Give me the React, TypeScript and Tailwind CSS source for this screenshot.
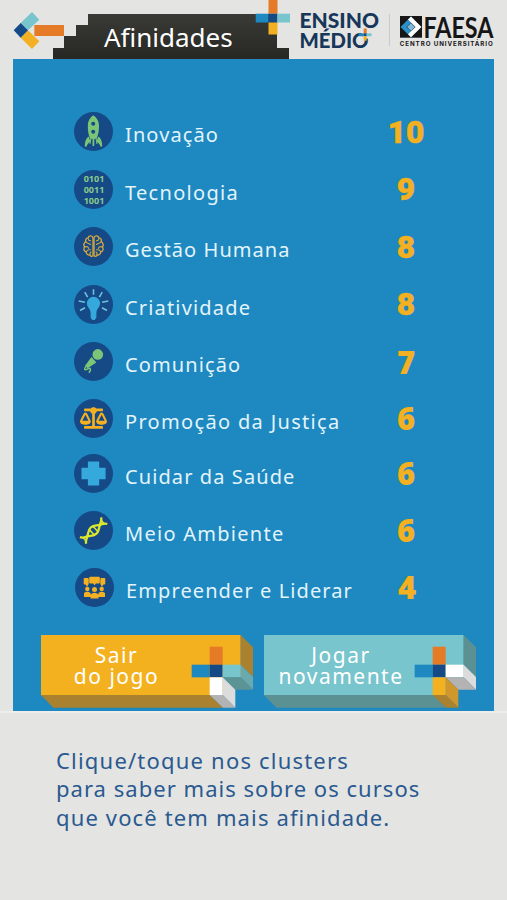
import type { ReactNode } from "react"
import { FaBalanceScale } from "react-icons/fa"
import clsx from "clsx"

type Affinity = {
  label: string
  score: number
  icon: ReactNode
  tracking: string
  scoreClass?: string
  rowClass?: string
}

const grotesk =
  "font-['Roboto',sans-serif] text-[31.5px] pt-[2px] [-webkit-text-stroke:0.6px_#f2b022]"
const humanist = "font-['Noto_Sans',sans-serif] text-[31px]"

function RocketIcon() {
  return (
    <svg viewBox="0 0 39 39" className="size-full" fill="#7cc576">
      <path d="M19.3 3.3c3.6 2.2 5.700 6 5.700 10.6 0 4.900-.8 9.300-2.600 12.800h-6.100c-1.800-3.500-2.500-7.900-2.500-12.800 0-4.600 1.900-8.400 5.500-10.600Z" />
      <path
        d="M15 25.200c-2.600 1.900-3.500 4.600-3.400 9.300 1-3 2.300-4.700 4.700-5.300M24 25.200c2.600 1.900 3.500 4.600 3.400 9.300-1-3-2.300-4.700-4.700-5.300M19.400 24v10"
        stroke="#7cc576"
        strokeWidth="1.700"
      />
      <path d="M17 26l-1 6M22 26l1 6" stroke="#7cc576" strokeWidth="1" />
      <circle cx="19.200" cy="11.800" r="2" fill="#154a87" />
      <circle cx="19.200" cy="19.700" r="2" fill="#154a87" />
    </svg>
  )
}

function BinaryIcon() {
  return (
    <div className="flex size-full flex-col items-center justify-center pl-px font-['Noto_Sans',sans-serif] text-[9px] leading-[11px] font-bold text-[#8bc98a]">
      <span>0101</span>
      <span>0011</span>
      <span>1001</span>
    </div>
  )
}

function BrainIcon() {
  return (
    <svg
      viewBox="0 0 39 39"
      className="size-full"
      fill="none"
      stroke="#dba93c"
      strokeWidth="1.300"
      strokeLinecap="round"
    >
      <path d="M19 10.500c-1.200-2.300-4.500-2-4.900.3-2.200.2-3 2.300-2.200 3.900-2.200 1-2.700 3.600-1.300 5.200-1.400 2-.5 4.500 1.600 5.100.2 2.400 2.200 3.400 3.700 2.900.9 2 3.100 1.800 3.100.2Z" />
      <path d="M20 10.500c1.200-2.300 4.500-2 4.900.3 2.200.2 3 2.300 2.200 3.900 2.200 1 2.700 3.600 1.300 5.200 1.400 2 .5 4.500-1.600 5.100-.2 2.400-2.200 3.400-3.700 2.900-.9 2-3.100 1.800-3.100.2Z" />
      <path
        d="M14.100 11.200c0 1.700 1 2.600 2.500 2.500M12.200 15c1 1.700 2.800 1.300 4.300 2.500M11 20c2-.8 3.300-.3 3.600 1.500M12.500 24.500c.5-1.500 1.700-2 4-1.700M16 27.500c-.3-1.200.2-2 1-2.500M24.900 11.200c0 1.700-1 2.600-2.500 2.500M26.800 15c-1 1.700-2.800 1.300-4.300 2.500M28 20c-2-.8-3.300-.3-3.600 1.500M26.500 24.500c-.5-1.500-1.700-2-4-1.700M23 27.500c.3-1.200-.2-2-1-2.500"
        strokeWidth="1.100"
      />
    </svg>
  )
}

function BulbIcon() {
  return (
    <svg viewBox="0 0 39 39" className="size-full">
      <path
        d="M19.500 11.700a6.600 6.600 0 0 1 6.600 6.600c0 4-3.700 5.500-3.700 9.700v4.500l-1.700 2.500h-2.400l-1.700-2.500V28c0-4.200-3.700-5.700-3.700-9.700a6.600 6.600 0 0 1 6.600-6.600Z"
        fill="#35a9dc"
      />
      <path
        d="M19.500 4.300v5.500M10.800 7.200l2.800 5M28.200 7.200l-2.800 5M4.700 16l6.300 1.200M34.300 16l-6.300 1.200M6 25.500l5-2.800M33 25.500l-5-2.800"
        stroke="#6fc0dd"
        strokeWidth="1.600"
      />
    </svg>
  )
}

function MicIcon() {
  return (
    <svg viewBox="0 0 39 39" className="size-full" fill="#7cc576">
      <circle cx="23.800" cy="12.400" r="5.300" />
      <path d="M17.500 15 22.300 20.500 13.600 26.200 11 23.800Z" />
      <path
        d="M12 24.500c-2.600 2.600-1.300 4.300 1.200 2.700 3-1.800 4.700-.4 1.700 3.500"
        fill="none"
        stroke="#7cc576"
        strokeWidth="1.500"
      />
    </svg>
  )
}

function CrossIcon() {
  return (
    <svg viewBox="0 0 39 39" className="size-full">
      <path
        d="M13.900 7.500h11.300v6.300h6.400v11.400h-6.400v6.300H13.900v-6.300H7.500V13.800h6.400Z"
        fill="#35a9dc"
      />
    </svg>
  )
}

function DnaIcon() {
  return (
    <svg viewBox="0 0 39 39" className="size-full">
      <g
        transform="translate(19.600 19.600) rotate(-43)"
        fill="none"
        stroke="#dbe92e"
        strokeWidth="2.300"
      >
        <path d="M-14.500-4.500C-13-1.500-11-1.500-8.500 0-5 2-4 4.200 0 4.200S5 2 8.500 0C11-1.500 13-1.500 14.500-4.500" />
        <path d="M-14.500 4.500C-13 1.500-11 1.500-8.500 0-5-2-4-4.200 0-4.200S5-2 8.500 0C11 1.500 13 1.500 14.500 4.500" />
        <path d="M-2.500-4v8M2.500-4v8M-12.500-3v6M12.500-3v6" strokeWidth="1.500" />
      </g>
    </svg>
  )
}

function TeamIcon() {
  return (
    <svg viewBox="0 0 39 39" className="size-full" fill="#f2b022">
      <rect x="8.700" y="10" width="5" height="6.500" rx="1" />
      <rect x="14.200" y="8.800" width="10.600" height="6.700" rx="1" />
      <rect x="25.300" y="10" width="5" height="6.500" rx="1" />
      <path d="M10.500 16h3l-1.500 3ZM28.500 16h-3l1.500 3ZM18 15h3l-1.500 2.500Z" />
      <circle cx="12.300" cy="21" r="2.200" />
      <circle cx="19.500" cy="21.500" r="2.500" />
      <circle cx="26.700" cy="21" r="2.200" />
      <path d="M9 25q3.300-2.500 6.500 0v4H9ZM23.500 25q3.300-2.500 6.500 0v4h-6.500ZM15.500 26.500q4-3.500 8 0v4h-8Z" />
    </svg>
  )
}

const affinities: Affinity[] = [
  { label: "Inovação", score: 10, icon: <RocketIcon />, tracking: "tracking-[1.1px]", scoreClass: grotesk },
  { label: "Tecnologia", score: 9, icon: <BinaryIcon />, tracking: "tracking-[1.3px]", scoreClass: grotesk },
  { label: "Gestão Humana", score: 8, icon: <BrainIcon />, tracking: "tracking-[1.05px]", scoreClass: grotesk },
  { label: "Criatividade", score: 8, icon: <BulbIcon />, tracking: "tracking-[1.17px]", scoreClass: grotesk },
  { label: "Comunição", score: 7, icon: <MicIcon />, tracking: "tracking-[1.12px]" },
  {
    label: "Promoção da Justiça",
    score: 6,
    icon: <FaBalanceScale className="h-[22px] w-[27px] text-[#f2b022]" />,
    tracking: "tracking-[1.33px]",
  },
  { label: "Cuidar da Saúde", score: 6, icon: <CrossIcon />, tracking: "tracking-[1.1px]" },
  { label: "Meio Ambiente", score: 6, icon: <DnaIcon />, tracking: "tracking-[1.27px]" },
  {
    label: "Empreender e Liderar",
    score: 4,
    icon: <TeamIcon />,
    tracking: "tracking-[1.1px]",
    rowClass: "translate-x-[1px]",
  },
]

function BackArrow() {
  return (
    <svg viewBox="39 33 156 117" className="h-[39px] w-[52px]">
      <path d="M96 36 118 59 84 91 62 69Z" fill="#78c5cd" />
      <path d="M84 91 118 124 96 147 62 113Z" fill="#f2b022" />
      <path d="M62 69 84 91 62 113 41 91Z" fill="#154a87" />
      <path d="M103 75H192V108H103Z" fill="#e57a27" />
    </svg>
  )
}

function HeaderCross() {
  return (
    <svg
      viewBox="0 0 35 35"
      className="absolute top-0 left-[255px] h-[35px] w-[35px]"
    >
      <path d="M13.500 0h9v13.700h-9Z" fill="#e57a27" />
      <path d="M.7 13.700h12.800v8.800H.7Z" fill="#1e88c1" />
      <path d="M13.500 13.700h9v8.800h-9Z" fill="#154a87" />
      <path d="M22.500 13.700H35v8.800H22.500Z" fill="#78c5cd" />
      <path d="M13.500 22.500h9v12h-9Z" fill="#f2b022" />
    </svg>
  )
}

function EnsinoMedioLogo() {
  return (
    <svg viewBox="299 10 82 42" className="h-[42px] w-[82px] overflow-visible">
      <g
        fill="#17375a"
        fontFamily="Lato, sans-serif"
        fontSize="20"
        fontWeight="900"
      >
        <text x="299.500" y="27.800" textLength="79.500" lengthAdjust="spacingAndGlyphs">
          ENSINO
        </text>
        <text x="299.500" y="48" textLength="69" lengthAdjust="spacingAndGlyphs">
          MÉDIO
        </text>
      </g>
      <path d="M360.500 31.500h11v7h-8Z" fill="#e4e4e3" />
      <path d="M363.700 28.500h3v5h-3Z" fill="#e57a27" />
      <path d="M358.700 33.300h5v2.900h-5Z" fill="#1e88c1" />
      <path d="M363.700 33.300h3v2.900h-3Z" fill="#154a87" />
      <path d="M366.700 33.300h4.800v2.900h-4.800Z" fill="#78c5cd" />
      <path d="M363.700 36.200h3v4.500h-3Z" fill="#f2b022" />
    </svg>
  )
}

function FaesaLogo() {
  return (
    <svg viewBox="398 13 97 34" className="h-[34px] w-[97px] overflow-visible">
      <path d="M400 16h22v21.700h-22Z" fill="#161616" />
      <path d="M411 16.500 400.500 27 411 37.300 414 34.300 406.500 27 414 19.500Z" fill="#2b8fca" />
      <path d="M411 16.500 421.500 27 411 37.300 408 34.300 415.500 27 408 19.500Z" fill="#fff" />
      <path d="M411 23 415 27 411 31 407 27Z" fill="#7db9da" />
      <text
        x="423.500"
        y="37.700"
        fill="#161616"
        fontFamily="Lato, sans-serif"
        fontSize="29"
        fontWeight="700"
        textLength="70"
        lengthAdjust="spacingAndGlyphs"
      >
        FAESA
      </text>
      <text
        x="399.800"
        y="45.700"
        fill="#161616"
        fontFamily="Inter, sans-serif"
        fontSize="6.200"
        fontWeight="700"
        textLength="93"
      >
        CENTRO UNIVERSITÁRIO
      </text>
    </svg>
  )
}

type BlockButtonProps = {
  children: ReactNode
  face: string
  shade: string
  right: [string, string, string]
  bottom: [string, string, string]
}

// Extruded block with a coloured cross near its lower right corner
function BlockButton({ children, face, shade, right, bottom }: BlockButtonProps) {
  return (
    <button type="button" className="relative flex h-[73px] w-[212px] items-start">
      <svg viewBox="0 0 636 219" className="absolute inset-0 size-full">
        <path d="M0 0H599V127H545V181H0Z" fill={face} />
        <path d="M599 0 636 37V126L599 89Z" fill={shade} />
        <path d="M0 180H506L546 218H37Z" fill={shade} />
        <path d="M506 35H545V89H506Z" fill="#e57a27" />
        <path d="M452 89H506V127H452Z" fill="#1e88c1" />
        <path d="M506 89H545V127H506Z" fill="#154a87" />
        <path d="M545 89H599V127H545Z" fill={right[0]} />
        <path d="M599 89 636 126V164L599 127Z" fill={right[1]} />
        <path d="M545 127H599L636 164H583Z" fill={right[2]} />
        <path d="M506 127H545V180H506Z" fill={bottom[0]} />
        <path d="M545 127 583 164V218L545 180Z" fill={bottom[1]} />
        <path d="M506 180H545L583 218H546Z" fill={bottom[2]} />
      </svg>
      {children}
    </button>
  )
}

export default function App() {
  return (
    <div className="flex h-[900px] w-[507px] flex-col overflow-hidden bg-[#e4e4e3] font-['Noto_Sans',sans-serif]">
      <header className="relative flex h-[59px] shrink-0">
        <div className="w-[53px] shrink-0 pt-[11px] pl-[13px]">
          <BackArrow />
        </div>
        <div className="mt-[14px] h-[45px] w-[236px] shrink-0 bg-linear-to-b from-[#3a3a36] to-[#272723] pl-[51px] [clip-path:polygon(35px_0,224px_0,224px_34px,236px_34px,236px_100%,0_100%,0_34px,11px_34px,11px_22px,23px_22px,23px_11px,35px_11px)]">
          <h1 className="pt-[3px] text-[26px] leading-[40px] text-white">
            Afinidades
          </h1>
        </div>
        <HeaderCross />
        <div className="flex pt-[10px] pl-[10px]">
          <EnsinoMedioLogo />
          <div className="mt-[4px] ml-[8px] h-[32px] w-px bg-[#c9c9c8]" />
          <div className="mt-[3px] ml-[8px]">
            <FaesaLogo />
          </div>
        </div>
      </header>

      <main className="ml-[13px] flex h-[652px] w-[481px] shrink-0 flex-col bg-[#1e88c1] pt-[44px]">
        <ul className="grid h-[511px] grid-rows-[57px_58px_57px_58px_57px_56px_54px_60px_54px] pr-[58px] pl-[61px]">
          {affinities.map(({ label, score, icon, tracking, scoreClass, rowClass }) => (
            <li key={label} className={clsx("flex items-center", rowClass)}>
              <div className="flex size-[39px] shrink-0 items-center justify-center overflow-hidden rounded-full bg-[#154a87]">
                {icon}
              </div>
              <span
                className={clsx(
                  "flex-1 pt-[7px] pl-[12px] text-[20px] leading-[28px] whitespace-nowrap text-[#e3f4fb]",
                  tracking
                )}
              >
                {label}
              </span>
              <span
                className={clsx(
                  "w-[60px] text-center leading-[34px] font-black text-[#f2b022]",
                  scoreClass ?? humanist
                )}
              >
                {score}
              </span>
            </li>
          ))}
        </ul>
        <div className="mt-[21px] flex gap-[10.5px] pl-[28px]">
          <BlockButton
            face="#f3b11f"
            shade="#a9812f"
            right={["#78c5cd", "#6aa9ad", "#5c9496"]}
            bottom={["#fff", "#dcdcdc", "#b3b3b3"]}
          >
            <span className="relative flex w-[151px] flex-col items-center pt-[10px] text-[21px] leading-[21px] tracking-[1.500px] text-white">
              <span>Sair</span>
              <span>do jogo</span>
            </span>
          </BlockButton>
          <BlockButton
            face="#78c5cd"
            shade="#5c9193"
            right={["#fff", "#dcdcdc", "#b3b3b3"]}
            bottom={["#f3b11f", "#cf972c", "#a9812f"]}
          >
            <span className="relative flex w-[155px] flex-col items-center pt-[10px] text-[21px] leading-[21px] tracking-[1.500px] text-white">
              <span>Jogar</span>
              <span>novamente</span>
            </span>
          </BlockButton>
        </div>
      </main>

      <p className="flex flex-col border-t-2 border-[#efedec] pt-[33px] pl-[56px] text-[22px] leading-[28.4px] text-[#2a5a8f]">
        <span className="tracking-[1.2px]">Clique/toque nos clusters</span>
        <span className="tracking-[1.03px]">para saber mais sobre os cursos</span>
        <span className="tracking-[1.14px]">que você tem mais afinidade.</span>
      </p>
    </div>
  )
}
